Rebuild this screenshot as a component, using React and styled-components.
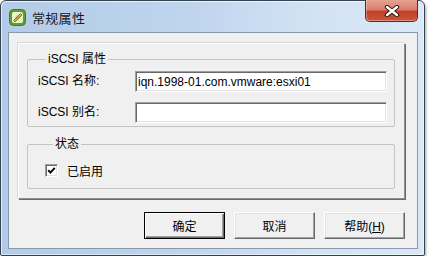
import React from "react"
import styled, { createGlobalStyle } from "styled-components"

const Global = createGlobalStyle`
  html, body {
    margin: 0;
    padding: 0;
    background: #ffffff;
  }
  body {
    font-family: "Liberation Sans", "Noto Sans CJK SC", sans-serif;
    font-size: 12px;
    color: #000;
  }
`

const Window = styled.div`
  width: 425px;
  height: 256px;
  box-sizing: border-box;
  display: flex;
  flex-direction: column;
  padding: 0 6px 6px 7px;
  border: 1px solid #34414f;
  border-radius: 6px 6px 2px 2px;
  background: linear-gradient(to right, #b3cbe8 0%, #bfd5ee 45%, #d3e3f4 75%, #dae8f6 100%);
  box-shadow: 1px 2px 3px rgba(0, 0, 0, 0.35), inset 1px 1px 0 rgba(255, 255, 255, 0.7),
    inset -1px -1px 0 rgba(255, 255, 255, 0.5);
`

const TitleBar = styled.div`
  height: 31px;
  flex-shrink: 0;
  display: flex;
  align-items: center;
`

const AppIcon = styled.svg`
  width: 17px;
  height: 17px;
  margin-left: 1px;
  margin-top: 2px;
`

const Title = styled.span`
  margin-left: 6px;
  margin-top: 2px;
  font-size: 13px;
  color: #1a1a1a;
  letter-spacing: 0.3px;
`

const CloseButton = styled.div`
  margin-left: auto;
  align-self: flex-start;
  margin-top: -1px;
  width: 53px;
  height: 22px;
  box-sizing: border-box;
  border: 1px solid #5a2a22;
  border-top: none;
  border-radius: 0 0 5px 5px;
  background: linear-gradient(to bottom, #e6a294 0%, #d7806c 45%, #c03f27 55%, #ca563c 100%);
  box-shadow: inset 0 -1px 0 rgba(255, 255, 255, 0.35), inset 1px 0 0 rgba(255, 255, 255, 0.3);
  display: flex;
  align-items: center;
  justify-content: center;
`

const Content = styled.div`
  flex: 1;
  display: flex;
  flex-direction: column;
  background: #f0f0f0;
  border: 1px solid #8799ad;
`

const Page = styled.div`
  margin: 10px 12px 0 9px;
  height: 156px;
  box-sizing: border-box;
  padding: 8px 9px 0 8px;
  border: 1px solid;
  border-color: #ffffff #8f8f8f #8f8f8f #ffffff;
  box-shadow: 1px 1px 0 #696969, -1px -1px 0 #d8d8d8;
  display: flex;
  flex-direction: column;
  gap: 10px;
`

const Group = styled.fieldset`
  margin: 0;
  padding: ${p => p.$pad};
  border: 1px solid #c4c4c4;
  border-radius: 2px;
  min-width: 0;
`

const Legend = styled.legend`
  margin-left: 8px;
  padding: 0 2px;
  line-height: 14px;
  font-size: 12px;
`

const FormGrid = styled.div`
  display: grid;
  grid-template-columns: 97px 1fr;
  row-gap: 10px;
  align-items: center;
`

const Label = styled.label`
  line-height: 21px;
  white-space: nowrap;
`

const TextInput = styled.input`
  height: 21px;
  box-sizing: border-box;
  width: 100%;
  margin: 0;
  padding: 0 2px;
  font: inherit;
  font-size: 12px;
  background: #fff;
  border: 1px solid;
  border-color: #a0a0a0 #ffffff #ffffff #a0a0a0;
  box-shadow: inset 1px 1px 0 #696969, inset -1px -1px 0 #e3e3e3;
  outline: none;
  color: #000;
`

const CheckRow = styled.div`
  display: flex;
  align-items: center;
  height: 17px;
  gap: 9px;
`

const CheckBox = styled.span`
  width: 13px;
  height: 13px;
  box-sizing: border-box;
  background: #fff;
  border: 1px solid;
  border-color: #a0a0a0 #ffffff #ffffff #a0a0a0;
  box-shadow: inset 1px 1px 0 #696969, inset -1px -1px 0 #e3e3e3;
  display: flex;
  align-items: center;
  justify-content: center;
`

const ButtonRow = styled.div`
  display: flex;
  justify-content: flex-end;
  gap: 9px;
  margin: 13px 12px 0 0;
`

const Button = styled.button`
  width: 81px;
  height: 27px;
  box-sizing: border-box;
  margin: 0;
  padding: 0;
  font: inherit;
  font-size: 12px;
  color: #000;
  background: #f0f0f0;
  border: 1px solid;
  border-color: ${p => (p.$default ? "#000 #000 #000 #000" : "#ffffff #696969 #696969 #ffffff")};
  box-shadow: ${p =>
    p.$default
      ? "inset 1px 1px 0 #ffffff, inset -1px -1px 0 #696969, inset -2px -2px 0 #a0a0a0"
      : "inset -1px -1px 0 #a0a0a0, inset 1px 1px 0 #e3e3e3"};
`

const Key = styled.span`
  text-decoration: underline;
`

const App = () => (
  <>
    <Global />
    <Window>
      <TitleBar>
        <AppIcon viewBox="0 0 17 17">
          <rect x="0.5" y="0.5" width="16" height="16" rx="4" fill="#5c9f2e" stroke="#3f7a1c" />
          <rect x="3" y="3" width="11" height="11" rx="2" fill="#e9f3d8" />
          <path d="M4.5 11.5 L11.5 4.5 L13 6 L6 13 Z" fill="#f2a51e" stroke="#8a5a10" strokeWidth="0.8" />
          <rect x="6.5" y="6.5" width="4" height="4" fill="#5c9f2e" opacity="0.35" transform="rotate(45 8.5 8.5)" />
        </AppIcon>
        <Title>常规属性</Title>
        <CloseButton>
          <svg width="16" height="12" viewBox="0 0 16 12">
            <path d="M3 2 L13 10 M13 2 L3 10" stroke="#3a1510" strokeWidth="4.4" strokeLinecap="round" />
            <path d="M3 2 L13 10 M13 2 L3 10" stroke="#ffffff" strokeWidth="2.4" strokeLinecap="round" />
          </svg>
        </CloseButton>
      </TitleBar>
      <Content>
        <Page>
          <Group $pad="5px 7px 3px 10px">
            <Legend>iSCSI 属性</Legend>
            <FormGrid>
              <Label>iSCSI 名称:</Label>
              <TextInput readOnly value="iqn.1998-01.com.vmware:esxi01" />
              <Label>iSCSI 别名:</Label>
              <TextInput readOnly value="" />
            </FormGrid>
          </Group>
          <Group $pad="11px 7px 9px 17px">
            <Legend>状态</Legend>
            <CheckRow>
              <CheckBox>
                <svg width="9" height="9" viewBox="0 0 9 9">
                  <path d="M1.2 4.2 L3.4 6.6 L7.8 1.8" fill="none" stroke="#000" strokeWidth="1.8" />
                </svg>
              </CheckBox>
              <span>已启用</span>
            </CheckRow>
          </Group>
        </Page>
        <ButtonRow>
          <Button $default>确定</Button>
          <Button>取消</Button>
          <Button>
            帮助(<Key>H</Key>)
          </Button>
        </ButtonRow>
      </Content>
    </Window>
  </>
)

export default App
